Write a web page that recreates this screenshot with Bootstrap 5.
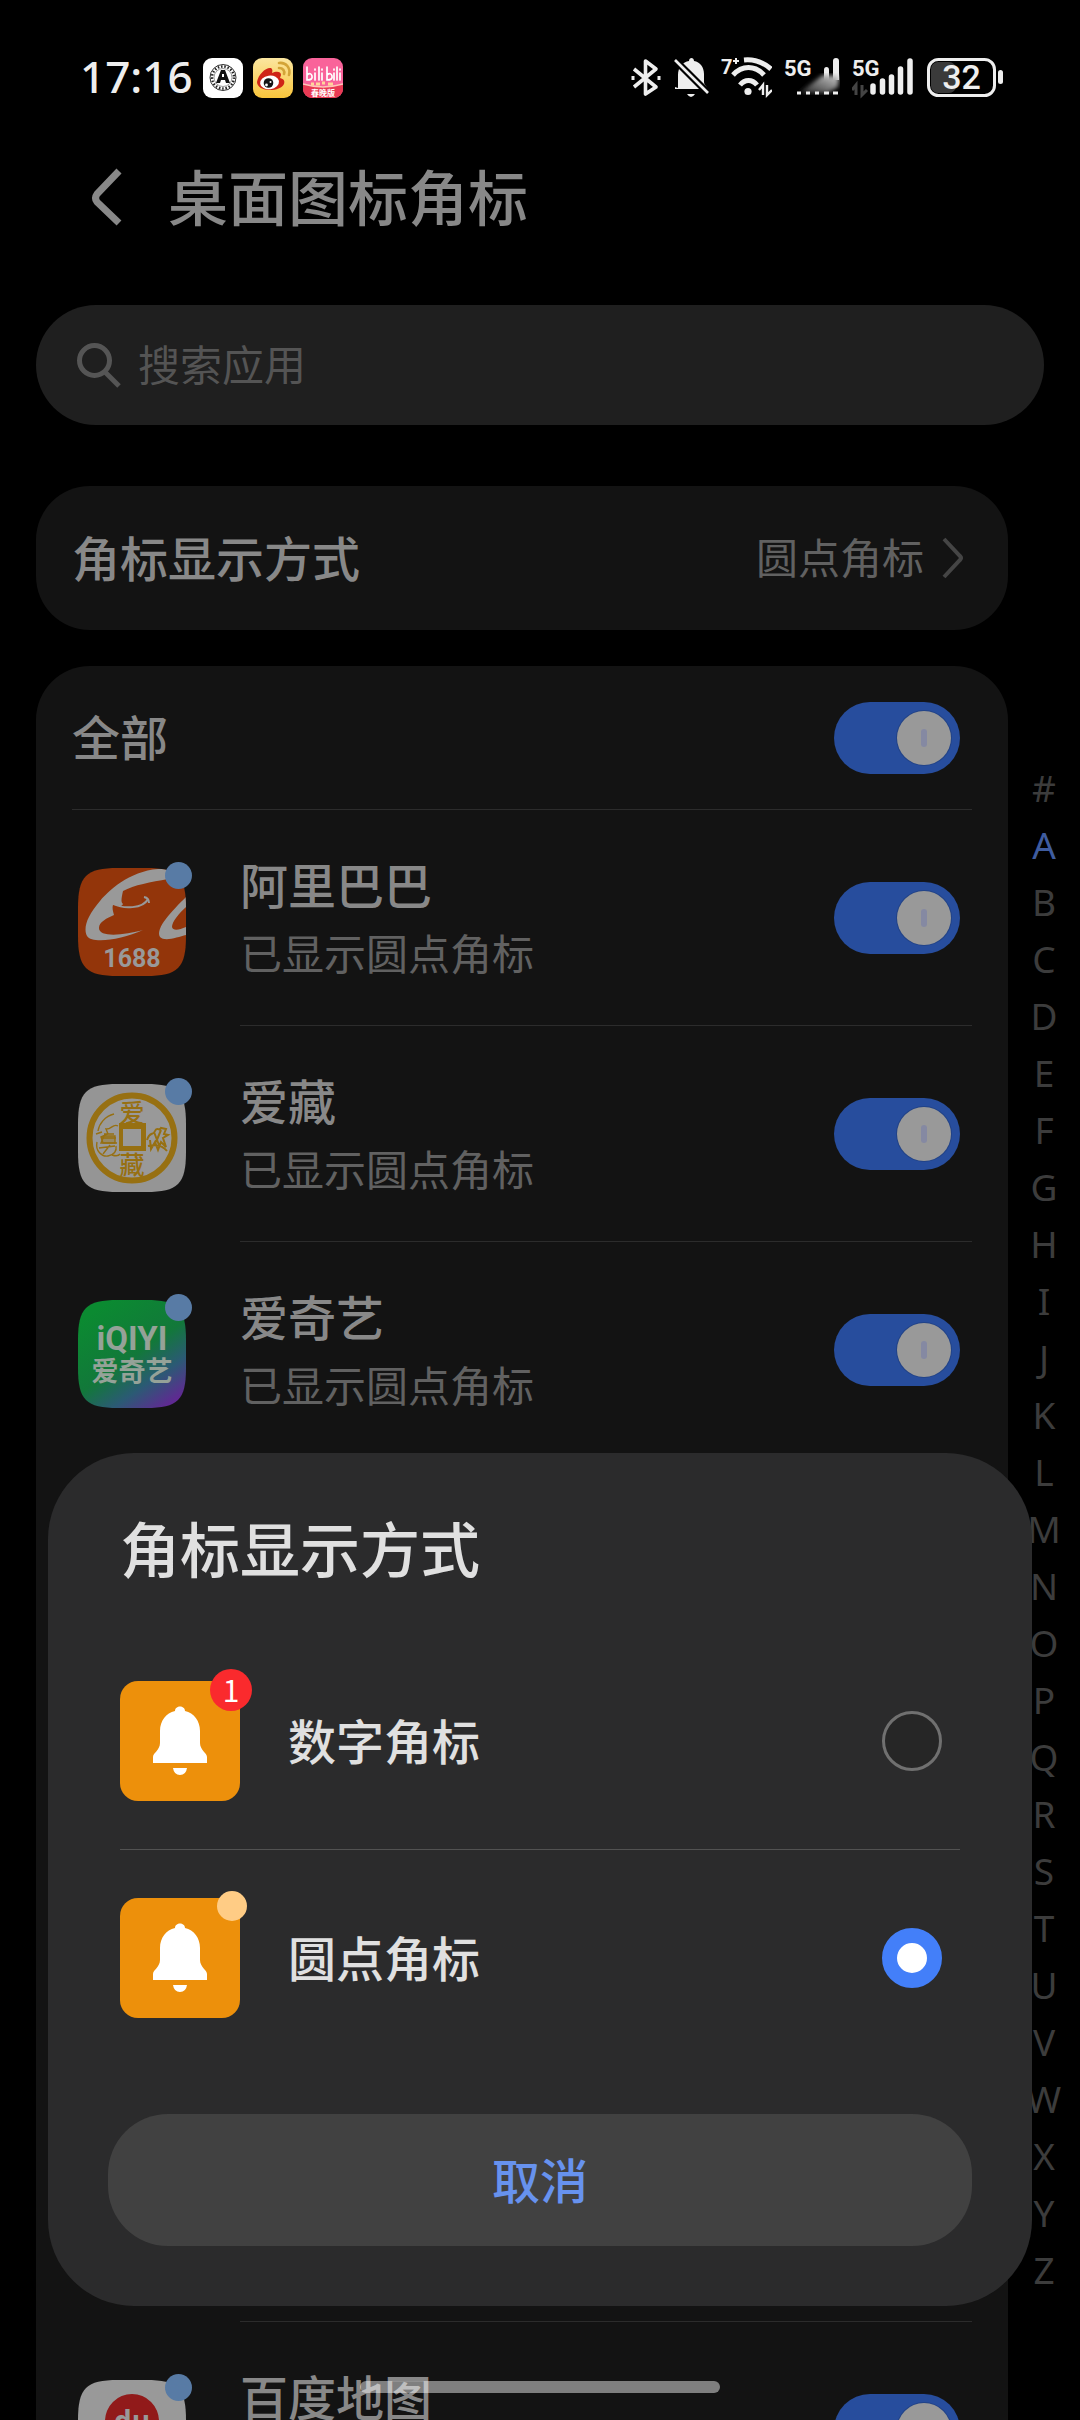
<!DOCTYPE html>
<html lang="zh-CN">
<head>
<meta charset="utf-8">
<meta name="viewport" content="width=device-width, initial-scale=1">
<title>桌面图标角标</title>
<link href="https://cdn.jsdelivr.net/npm/bootstrap@5.3.0/dist/css/bootstrap.min.css" rel="stylesheet">
<style>
  body { background: #000; color: #888; font-family: "Noto Sans", "Noto Sans CJK SC", sans-serif; }
  svg { display: block; flex: none; }
  .screen { height: 100vh; min-height: 1200px; }
  .zh { font-family: "Noto Sans CJK SC", "Noto Sans", sans-serif; }

  .status { height: 156px; padding: 0 76px 0 80px; color: #eee; }
  .clock { font-size: 44px; line-height: 60px; font-weight: 500; width: 123px; padding-bottom: 4px; }
  .status-gap { gap: 12px; }
  .notice-gap { gap: 10px; }

  .topbar { height: 82px; padding-left: 84px; gap: 38px; }
  .topbar h1 { font-size: 60px; line-height: 72px; font-weight: 500; padding-bottom: 4px; }
  .back { width: 46px; color: #888; }

  .search { height: 120px; margin: 67px 36px 61px; padding: 0 40px; gap: 16px; background: #1f1f1f; color: #555; }
  .search .form-control, .search .form-control:focus { color: #888; font-size: 42px; line-height: 60px; box-shadow: none; }
  .search .form-control { padding: 0 0 4px; }
  .search .form-control::placeholder { color: #545454; opacity: 1; }

  .panels { padding-left: 36px; gap: 36px; }
  .panel { background: #131313; border-radius: 54px; }
  .label-lg { font-size: 48px; line-height: 60px; font-weight: 500; color: #888; }
  .label-sm { font-size: 42px; line-height: 54px; color: #616161; }
  .label-solo { padding-bottom: 5px; }
  .mode { height: 144px; padding: 0 42px 0 36px; }

  .apps { padding: 0 36px; }
  .apps-all { height: 144px; border-bottom: 1px solid #2c2c2c; }
  .app { height: 216px; gap: 54px; padding-left: 6px; }
  .app-body { border-bottom: 1px solid #2c2c2c; }
  .app-text { gap: 12px; padding-bottom: 4px; }
  .app-covered { height: 864px; margin-left: 168px; border-bottom: 1px solid #2c2c2c; }
  .dot { width: 27px; height: 27px; top: -6px; right: -6px; background: #587ba5; }

  .form-switch .toggle { width: 126px; height: 72px; margin: 0 12px 0 0; float: none; border: 0; border-radius: 36px; flex: none; }
  .form-switch .toggle:checked { background: #274d9d url("data:image/svg+xml,%3Csvg xmlns='http://www.w3.org/2000/svg' viewBox='0 0 126 72'%3E%3Ccircle cx='90' cy='36' r='28' fill='%23224387'/%3E%3Ccircle cx='90' cy='36' r='27' fill='%23999'/%3E%3Crect x='87' y='27' width='6' height='18' rx='3' fill='%238589a2'/%3E%3C/svg%3E") center / 100% 100%; }

  .letters { width: 72px; padding-top: 273px; font-size: 37px; line-height: 57px; }
  .letters a { color: #3c3c3c; }
  .letters a.active { color: #3f5c9f; }

  .sheet { left: 48px; right: 48px; bottom: 114px; padding: 58px 60px 60px; background: #2b2b2c; border-radius: 86px; color: #e0e0e0; }
  .sheet h2 { font-size: 60px; line-height: 72px; font-weight: 500; margin: 0 12px 50px; }
  .choice { height: 217px; margin: 0 12px; padding-right: 18px; gap: 48px; }
  .choice + .choice { height: 216px; }
  .choice:not(:last-child) { border-bottom: 1px solid #525252; }
  .choice label { font-size: 48px; line-height: 60px; font-weight: 500; }
  .choice .form-check-input { width: 60px; height: 60px; margin: 0; border: 3px solid #707070; background: #262626; flex: none; }
  .choice .form-check-input:checked { border: 15px solid #437ff9; background: #fff; }
  .bell { width: 120px; height: 120px; border-radius: 18px; background: #ed900b; }
  .count { width: 42px; height: 42px; top: -12px; right: -12px; background: #fa2a2d; color: #fff; font-size: 30px; line-height: 40px; }
  .pip { width: 30px; height: 30px; top: -7px; right: -7px; background: #ffcc85; }
  .cancel, .cancel:hover { height: 132px; margin-top: 48px; padding: 0 0 5px; border: 0; border-radius: 60px; background: #414141; color: #6792ee; font-size: 48px; line-height: 60px; font-weight: 500; }

  .home { width: 360px; height: 12px; bottom: 27px; background: rgba(255, 255, 255, .46); }
</style>
</head>
<body>
<div class="screen d-flex flex-column position-relative overflow-hidden">

  <header class="status d-flex align-items-center flex-shrink-0">
    <span class="clock">17:16</span>
    <div class="d-flex notice-gap me-auto">
      <svg width="40" height="40" viewBox="0 0 40 40" aria-hidden="true">
        <rect width="40" height="40" rx="9" fill="#fff"/>
        <circle cx="20" cy="19.500" r="13" fill="none" stroke="#333" stroke-width="1"/>
        <circle cx="20" cy="19.500" r="11" fill="none" stroke="#222" stroke-width="2.500" stroke-dasharray="1.500 1.800"/>
        <circle cx="20" cy="19.500" r="9" fill="#fff" stroke="#555" stroke-width=".6"/>
        <path d="M13 25 18 12h4l5 13h-4l-1-3h-4l-1 3zM19 19h2v-3h-2z" fill="#111" fill-rule="evenodd"/>
      </svg>
      <svg width="40" height="40" viewBox="0 0 40 40" aria-hidden="true">
        <defs><linearGradient id="wb" x2="0" y2="1"><stop stop-color="#fbe6a0"/><stop offset="1" stop-color="#f9c53c"/></linearGradient></defs>
        <rect width="40" height="40" rx="9" fill="url(#wb)"/>
        <path d="M4 24c1-7 8-14 13-14 2 0 3 2 2 5 4-2 9-2 9 2l-1 3c4 1 5 3 4 6-2 4-8 6-14 6C10 32 4 29 4 24z" fill="#cf2417"/>
        <ellipse cx="16.500" cy="24.500" rx="9.500" ry="6.800" fill="#fff" transform="rotate(-8 16 24)"/>
        <circle cx="15.500" cy="25" r="4.800" fill="#151515"/><circle cx="13.500" cy="27" r="1.400" fill="#fff"/><circle cx="17.500" cy="24" r="1" fill="#fff"/>
        <path d="M26 5c7-1 12 5 10 12M26 10c4 0 6 3 5 6" fill="none" stroke="#d3a438" stroke-width="2.600" stroke-linecap="round"/>
      </svg>
      <svg width="40" height="40" viewBox="0 0 40 40" aria-hidden="true">
        <defs><clipPath id="bc"><rect width="40" height="40" rx="9"/></clipPath></defs>
        <g clip-path="url(#bc)">
          <rect width="40" height="40" fill="#f9639a"/>
          <path d="M0 26q20 5 40 0v14H0z" fill="#e93a54"/>
          <path d="M0 26q20 6 40 0" fill="none" stroke="#ffc6b8" stroke-width="1.500"/>
          <path d="M8 26h3m2 0h4m2-1h3m3 1h5" stroke="#ffd59a" stroke-width="3"/>
          <path d="M4 9v13q6 0 5-4t-5-1M12 15v7M12 11v1M16 9v13M19 15v7M19 11v1M24 9v13q6 0 5-4t-5-1M31 15v7M31 11v1M34 9v13M37 15v7M37 11v1" fill="none" stroke="#fff" stroke-width="1.700" stroke-linecap="round"/>
          <text x="20" y="38" text-anchor="middle" font-size="8" font-weight="700" fill="#fff" font-family="Noto Sans CJK SC">春晚版</text>
        </g>
      </svg>
    </div>
    <div class="d-flex status-gap" aria-hidden="true">
      <svg width="30" height="44" viewBox="0 0 30 44" fill="none" stroke="#eee" stroke-width="3.600" stroke-linejoin="round">
        <path d="M3 13 25 31 14.500 38V5L25 13 3 31"/><path d="M2 20v4M28 20v4" stroke-width="3"/>
      </svg>
      <svg width="36" height="44" viewBox="0 0 36 44">
        <path d="M5 32V19C5 11 10 6 16 5c0-4 5-4 5 0 6 1 10 6 10 13v8c0 3 3 4 3 7H2v-2z" fill="#eee"/>
        <path d="M14 38h8q-4 6-8 0z" fill="#eee"/>
        <path d="M0 2 36 38" stroke="#000" stroke-width="7"/><path d="M2 4 35 37" stroke="#eee" stroke-width="2.600"/>
      </svg>
      <svg width="51" height="44" viewBox="0 0 51 44" fill="none" stroke="#eee" stroke-width="4.500">
        <path d="M23 4c10-1 20 3 27 9M12 19c9-10 22-10 31 0M19 29c5-6 12-6 17 0" stroke-width="5"/>
        <circle cx="27" cy="35.500" r="3.600" fill="#eee" stroke="none"/>
        <path d="M38 34 42 29v10M51 34 46 39V29" stroke-width="2.400"/>
        <text x="0" y="18" font-size="20" font-weight="700" fill="#eee" stroke="none" font-family="Roboto">7</text>
        <path d="M12 5h6M15 2v6" stroke-width="2"/>
      </svg>
      <svg width="56" height="44" viewBox="0 0 56 44">
        <defs><linearGradient id="sg" x1="0" x2="1" y1="1" y2="0"><stop stop-color="#222"/><stop offset="1" stop-color="#ccc"/></linearGradient><filter id="sb"><feGaussianBlur stdDeviation="2"/></filter></defs>
        <path d="M40 14q0-3 2.500-3t2.500 3v12h-5zM49 5q0-3 3-3t3 3v19h-6z" fill="#eee"/>
        <path d="M15 37 31 25 39 19 55 20 54 31 44 37z" fill="url(#sg)" filter="url(#sb)"/>
        <path d="M13 37h4M22 37h4M31 37h4M40 37h5M49 37h5" stroke="#eee" stroke-width="3"/>
        <text x="0" y="20" font-size="22" font-weight="700" fill="#eee" font-family="Roboto">5G</text>
      </svg>
      <svg width="62" height="44" viewBox="0 0 62 44">
        <path d="M21 36v-6M30.500 36V25M39.500 36V21M48.500 36V13M58 36V5" stroke="#eee" stroke-width="5.500" stroke-linecap="round"/>
        <path d="M0 34 4 29v10M15 34 10 39V29" fill="none" stroke="#444" stroke-width="3"/>
        <text x="0" y="20" font-size="22" font-weight="700" fill="#eee" font-family="Roboto">5G</text>
      </svg>
      <svg width="78" height="44" viewBox="0 0 78 44">
        <rect x="5" y="6" width="25" height="31" rx="7" fill="#3a3a3a"/>
        <rect x="2.500" y="3.500" width="66" height="36" rx="10" fill="none" stroke="#eee" stroke-width="3"/>
        <rect x="72" y="14" width="5" height="14" rx="2.500" fill="#eee"/>
        <text x="35.500" y="33" text-anchor="middle" font-size="34" font-weight="500" fill="#eee" font-family="Roboto">32</text>
      </svg>
    </div>
  </header>

  <div class="topbar d-flex align-items-center flex-shrink-0">
    <button class="back btn p-0 border-0" type="button" aria-label="返回">
      <svg width="46" height="60" viewBox="0 0 46 60" fill="none" stroke="currentColor" stroke-width="7"><path d="M35 4 13 27q-3 4 0 8L35 56"/></svg>
    </button>
    <h1 class="zh m-0">桌面图标角标</h1>
  </div>

  <form class="search d-flex align-items-center flex-shrink-0 rounded-pill" role="search">
    <svg width="46" height="46" viewBox="0 0 46 46" fill="none" stroke="currentColor" stroke-width="5"><circle cx="18.500" cy="18.500" r="15"/><path d="m29 30 14 14"/></svg>
    <input class="zh form-control border-0 bg-transparent" type="search" placeholder="搜索应用" aria-label="搜索应用">
  </form>

  <div class="d-flex flex-shrink-0">
    <main class="panels d-flex flex-column flex-grow-1">
      <button type="button" class="mode panel zh btn border-0 d-flex align-items-center">
        <span class="label-lg label-solo me-auto">角标显示方式</span>
        <span class="label-sm label-solo me-3">圆点角标</span>
        <svg width="26" height="42" viewBox="0 0 26 42" fill="none" stroke="#454545" stroke-width="4"><path d="m4 2 16 17q2 2 0 4L4 40"/></svg>
      </button>

      <section class="apps panel zh">
        <div class="apps-all form-switch d-flex align-items-center p-0">
          <label class="label-lg label-solo me-auto" for="sw-all">全部</label>
          <input class="toggle form-check-input" type="checkbox" role="switch" id="sw-all" checked>
        </div>
        <div class="app d-flex">
          <div class="align-self-center pt-2">
            <div class="position-relative">
            <svg width="108" height="108" viewBox="0 0 108 108" aria-hidden="true">
              <defs><clipPath id="sq"><path d="M0 40C0 8 8 0 40 0h28c32 0 40 8 40 40v28c0 32-8 40-40 40H40C8 108 0 100 0 68z"/></clipPath></defs>
              <g clip-path="url(#sq)">
                <rect width="108" height="108" fill="#93350a"/>
                <path d="M90 1C58-1 34 19 22 33 9 48 5 60 9 68c5 8 34 4 56-6-18 5-44 8-44-2 0-6 8-10 15-13-1-4-2-7-1-10 8 2 9 1 10-1-2-2-2-4 0-13 11-6 28-9 45-12z" fill="#999"/>
                <path d="M36 36c9 5 29 5 34-5M66 29q5 1 5 6" fill="none" stroke="#999" stroke-width="2"/>
                <path d="M108 29C94 43 77 60 82 69c5 5 18 0 26-2v-8c-7 3-13 4-14 0 0-5 7-14 14-20z" fill="#999"/>
                <text x="54" y="99" text-anchor="middle" font-size="25" font-weight="700" fill="#999" font-family="Roboto">1688</text>
              </g>
            </svg>
            <span class="dot rounded-circle position-absolute"></span>
            </div>
          </div>
          <div class="app-body form-switch d-flex align-items-center flex-grow-1 p-0">
            <label class="app-text d-flex flex-column me-auto" for="sw-1"><span class="label-lg">阿里巴巴</span><span class="label-sm">已显示圆点角标</span></label>
            <input class="toggle form-check-input" type="checkbox" role="switch" id="sw-1" checked>
          </div>
        </div>
        <div class="app d-flex">
          <div class="align-self-center pt-2">
            <div class="position-relative">
            <svg width="108" height="108" viewBox="0 0 108 108" aria-hidden="true">
              <g clip-path="url(#sq)">
                <rect width="108" height="108" fill="#959595"/>
                <circle cx="54" cy="54" r="42.500" fill="#999" stroke="#977012" stroke-width="6"/>
                <g fill="none" stroke="#977012" stroke-width="1.400">
                  <path d="M36 30c-9 2-15 10-16 17M40 42c-5-3-7 4-12 3l2 5-7 3 2 6h14M24 54h14M26 50h10M19 58c-2 9 5 15 11 14s9-5 8-10M21 64l16-2M25 70l7-9M18 50l6-2M34 71q6 2 8-1" />
                  <path d="M23 59h14v-7H26z" fill="#977012" fill-opacity=".4"/>
                  <path d="M69 56c3-9 6-4 8-9s4 1 6-3l5 1-2 5 4 1-5 3 3 9-5-5-3 8-3-8-4 7-1-9M70 62c8-2 15 0 19 5M76 48l5 13M83 46l-5 12" stroke-width="2"/>
                </g>
                <path d="M41 39h27v28H41z" fill="#977012"/><path d="M45 45h18v17H45z" fill="#999"/>
                <text x="54" y="38" text-anchor="middle" font-size="25" font-weight="500" fill="#977012" font-family="Noto Sans CJK SC">爱</text>
                <text x="54" y="90" text-anchor="middle" font-size="25" font-weight="500" fill="#977012" font-family="Noto Sans CJK SC">藏</text>
              </g>
            </svg>
            <span class="dot rounded-circle position-absolute"></span>
            </div>
          </div>
          <div class="app-body form-switch d-flex align-items-center flex-grow-1 p-0">
            <label class="app-text d-flex flex-column me-auto" for="sw-2"><span class="label-lg">爱藏</span><span class="label-sm">已显示圆点角标</span></label>
            <input class="toggle form-check-input" type="checkbox" role="switch" id="sw-2" checked>
          </div>
        </div>
        <div class="app d-flex">
          <div class="align-self-center pt-2">
            <div class="position-relative">
            <svg width="108" height="108" viewBox="0 0 108 108" aria-hidden="true">
              <defs><linearGradient id="iq" x1=".3" y1="0" x2="1" y2="1"><stop stop-color="#0b8a31"/><stop offset=".45" stop-color="#12783a"/><stop offset=".68" stop-color="#2b5a74"/><stop offset=".9" stop-color="#5f2a92"/></linearGradient></defs>
              <g clip-path="url(#sq)">
                <rect width="108" height="108" fill="url(#iq)"/>
                <text x="54" y="50" text-anchor="middle" font-size="33" font-weight="700" fill="#95a298" font-family="Roboto">iQIYI</text>
                <text x="54" y="81" text-anchor="middle" font-size="27" font-weight="700" fill="#95a298" font-family="Noto Sans CJK SC">爱奇艺</text>
              </g>
            </svg>
            <span class="dot rounded-circle position-absolute"></span>
            </div>
          </div>
          <div class="app-body form-switch d-flex align-items-center flex-grow-1 p-0">
            <label class="app-text d-flex flex-column me-auto" for="sw-3"><span class="label-lg">爱奇艺</span><span class="label-sm">已显示圆点角标</span></label>
            <input class="toggle form-check-input" type="checkbox" role="switch" id="sw-3" checked>
          </div>
        </div>
        <!-- rows that stay behind the open dialog -->
        <div class="app-covered"></div>
        <div class="app d-flex">
          <div class="align-self-center pt-2">
            <div class="position-relative">
            <svg width="108" height="108" viewBox="0 0 108 108" aria-hidden="true">
              <g clip-path="url(#sq)">
                <rect width="108" height="108" fill="#999"/>
                <path d="M54 92C44 76 27 60 27 41a27 27 0 0 1 54 0c0 19-17 35-27 51z" fill="#911a1a"/>
                <text x="54" y="51" text-anchor="middle" font-size="28" font-weight="700" fill="#999" font-family="Open Sans">du</text>
              </g>
            </svg>
            <span class="dot rounded-circle position-absolute"></span>
            </div>
          </div>
          <div class="app-body form-switch d-flex align-items-center flex-grow-1 p-0">
            <label class="app-text d-flex flex-column me-auto" for="sw-7"><span class="label-lg">百度地图</span><span class="label-sm">已显示圆点角标</span></label>
            <input class="toggle form-check-input" type="checkbox" role="switch" id="sw-7" checked>
          </div>
        </div>
      </section>
    </main>

    <nav class="letters nav flex-column flex-nowrap text-center" aria-label="字母索引">
      <a class="text-decoration-none" href="#">#</a><a class="active text-decoration-none" href="#">A</a><a class="text-decoration-none" href="#">B</a><a class="text-decoration-none" href="#">C</a><a class="text-decoration-none" href="#">D</a><a class="text-decoration-none" href="#">E</a><a class="text-decoration-none" href="#">F</a><a class="text-decoration-none" href="#">G</a><a class="text-decoration-none" href="#">H</a><a class="text-decoration-none" href="#">I</a><a class="text-decoration-none" href="#">J</a><a class="text-decoration-none" href="#">K</a><a class="text-decoration-none" href="#">L</a><a class="text-decoration-none" href="#">M</a><a class="text-decoration-none" href="#">N</a><a class="text-decoration-none" href="#">O</a><a class="text-decoration-none" href="#">P</a><a class="text-decoration-none" href="#">Q</a><a class="text-decoration-none" href="#">R</a><a class="text-decoration-none" href="#">S</a><a class="text-decoration-none" href="#">T</a><a class="text-decoration-none" href="#">U</a><a class="text-decoration-none" href="#">V</a><a class="text-decoration-none" href="#">W</a><a class="text-decoration-none" href="#">X</a><a class="text-decoration-none" href="#">Y</a><a class="text-decoration-none" href="#">Z</a>
    </nav>
  </div>

  <div class="sheet zh position-absolute d-flex flex-column" role="dialog" aria-labelledby="sheet-title">
    <h2 id="sheet-title">角标显示方式</h2>
    <div>
      <div class="choice d-flex align-items-center">
        <div class="bell position-relative d-flex align-items-center justify-content-center">
          <svg width="56" height="70" viewBox="0 0 56 70" fill="#fff" aria-hidden="true"><path d="M23 5c0-6 10-6 10 0 9 2 15 10 15 20v12c0 7 7 10 7 14v6H1v-6c0-4 7-7 7-14V25C8 15 14 7 23 5zM21 62h14q-1 7-7 7t-7-7z"/></svg>
          <span class="count rounded-circle position-absolute text-center">1</span>
        </div>
        <label class="label-solo me-auto" for="mode-number">数字角标</label>
        <input class="form-check-input" type="radio" name="mode" id="mode-number">
      </div>
      <div class="choice d-flex align-items-center">
        <div class="bell position-relative d-flex align-items-center justify-content-center">
          <svg width="56" height="70" viewBox="0 0 56 70" fill="#fff" aria-hidden="true"><path d="M23 5c0-6 10-6 10 0 9 2 15 10 15 20v12c0 7 7 10 7 14v6H1v-6c0-4 7-7 7-14V25C8 15 14 7 23 5zM21 62h14q-1 7-7 7t-7-7z"/></svg>
          <span class="pip rounded-circle position-absolute"></span>
        </div>
        <label class="label-solo me-auto" for="mode-dot">圆点角标</label>
        <input class="form-check-input" type="radio" name="mode" id="mode-dot" checked>
      </div>
    </div>
    <button type="button" class="cancel btn">取消</button>
  </div>

  <div class="home position-absolute start-50 translate-middle-x rounded-pill"></div>
</div>
<script src="https://cdn.jsdelivr.net/npm/bootstrap@5.3.0/dist/js/bootstrap.bundle.min.js"></script>
</body>
</html>
